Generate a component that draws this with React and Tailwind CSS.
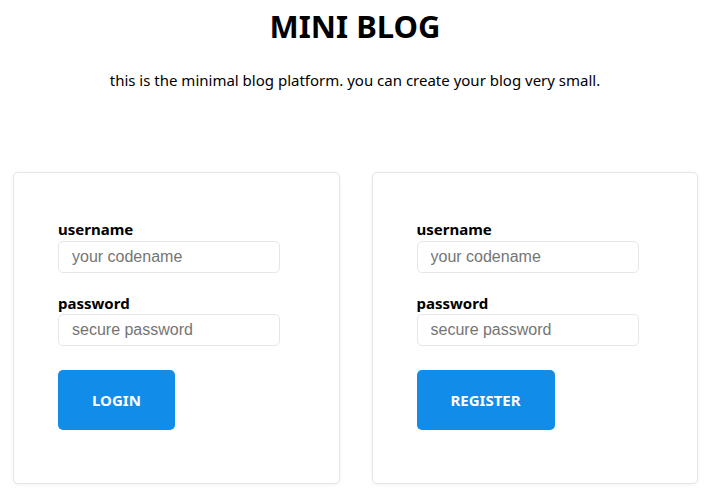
import { useState } from 'react';

function AuthCard({ action }) {
  const [username, setUsername] = useState('');
  const [password, setPassword] = useState('');

  return (
    <form
      className="flex-1 border border-[#e6e6e6] rounded-[5px] bg-white shadow-[0_1px_4px_rgba(0,0,0,0.05)] pl-[44px] pt-[46px] pb-[53px]"
      onSubmit={(e) => e.preventDefault()}
    >
      <label className="block text-[15px] font-bold leading-[20px]">username</label>
      <input
        className="mt-[2px] w-[222px] h-[32px] border border-[#e6e6e6] rounded-[5px] px-[13px] text-[16px] font-['Liberation_Sans',Arial,sans-serif] placeholder:text-[#757575] outline-none"
        type="text"
        value={username}
        onChange={(e) => setUsername(e.target.value)}
        placeholder="your codename"
      />
      <label className="block mt-[20px] text-[15px] font-bold leading-[20px]">password</label>
      <input
        className="mt-[1px] w-[222px] h-[32px] border border-[#e6e6e6] rounded-[5px] px-[13px] text-[16px] font-['Liberation_Sans',Arial,sans-serif] placeholder:text-[#757575] outline-none"
        type="password"
        value={password}
        onChange={(e) => setPassword(e.target.value)}
        placeholder="secure password"
      />
      <div className="mt-[24px]">
        <button
          type="submit"
          className="h-[60px] px-[34px] rounded-[5px] bg-[#128ce9] text-white text-[15px] font-bold cursor-pointer"
        >
          {action}
        </button>
      </div>
    </form>
  );
}

export default function App() {
  return (
    <div className="w-full min-h-[494px] bg-white text-black font-['Noto_Sans','Open_Sans',sans-serif]">
      <h1 className="pt-[3px] text-center text-[31px] font-bold leading-[46px]">MINI BLOG</h1>
      <p className="mt-[20px] text-center text-[15px] leading-[22px]">
        this is the minimal blog platform. you can create your blog very small.
      </p>
      <div className="flex gap-[32px] pl-[13px] pr-[12px] mt-[81px]">
        <AuthCard action="LOGIN" />
        <AuthCard action="REGISTER" />
      </div>
    </div>
  );
}
